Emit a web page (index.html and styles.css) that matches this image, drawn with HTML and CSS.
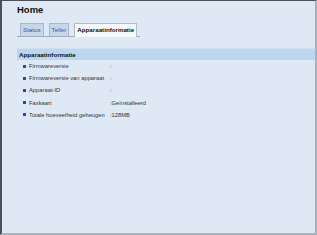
FILE: index.html
```html
<!DOCTYPE html>
<html lang="nl">
<head>
  <meta charset="UTF-8" />
  <title>Home</title>
  <link rel="stylesheet" href="styles.css">
</head>
<body>
  <div class="frame">
    <h1 class="title">Home</h1>
    <div class="tabs">
      <div class="tab">Status</div>
      <div class="tab">Teller</div>
      <div class="tab tab-active">Apparaatinformatie</div>
    </div>
    <div class="section">
      <div class="section-head">Apparaatinformatie</div>
      <div class="row"><span class="bullet"></span><span class="label">Firmwareversie</span><span class="value">:</span></div>
      <div class="row"><span class="bullet"></span><span class="label">Firmwareversie van apparaat</span><span class="value">:</span></div>
      <div class="row"><span class="bullet"></span><span class="label">Apparaat-ID</span><span class="value">:</span></div>
      <div class="row"><span class="bullet"></span><span class="label">Faxkaart</span><span class="value">:Geïnstalleerd</span></div>
      <div class="row"><span class="bullet"></span><span class="label">Totale hoeveelheid geheugen</span><span class="value">:128MB</span></div>
    </div>
  </div>
</body>
</html>
```

FILE: styles.css
```css
* {
  box-sizing: border-box;
}

html,
body {
  margin: 0;
  width: 100%;
  height: 100%;
}

body {
  background: #dfe9f5;
  font-family: 'Liberation Sans', Arial, sans-serif;
  color: #333;
}

.frame {
  width: 317px;
  height: 235px;
  background: #dfe9f5;
  border-top: 1px solid #4b5058;
  border-left: 2px solid #4b5058;
  border-right: 2px solid #a9b1ba;
  border-bottom: 2px solid #a9b1ba;
  padding: 3px 0 0 15px;
}

.title {
  margin: 0;
  font-size: 9.5px;
  line-height: 11px;
  font-weight: bold;
  color: #111;
}

.tabs {
  display: flex;
  align-items: flex-end;
  gap: 5px;
  width: 123px;
  margin-top: 8px;
  padding-left: 3px;
  border-bottom: 1px solid #a3adb8;
  height: 14px;
}

.tab {
  height: 13px;
  padding: 0 2px;
  border: 1px solid #aab8ca;
  border-bottom: none;
  background: #c6d7ec;
  color: #3a58a6;
  font-size: 6.2px;
  line-height: 12px;
  white-space: nowrap;
}

.tab-active {
  height: 14px;
  margin-bottom: -1px;
  background: #f5f8fb;
  border-color: #b4bcc6;
  color: #111;
  font-weight: bold;
}

.section {
  margin-top: 11px;
}

.section-head {
  height: 12px;
  padding-left: 2px;
  background: #bcd6ee;
  border-top: 1px solid #cfe0f1;
  font-size: 6.2px;
  line-height: 11px;
  font-weight: bold;
  color: #111;
}

.row {
  display: flex;
  align-items: center;
  height: 12.2px;
  padding-left: 6px;
  font-size: 5.8px;
}

.bullet {
  width: 3px;
  height: 3px;
  margin-right: 3px;
  background: #2d4c8e;
}

.label {
  width: 81px;
  white-space: nowrap;
}

.value {
  white-space: nowrap;
}
```
